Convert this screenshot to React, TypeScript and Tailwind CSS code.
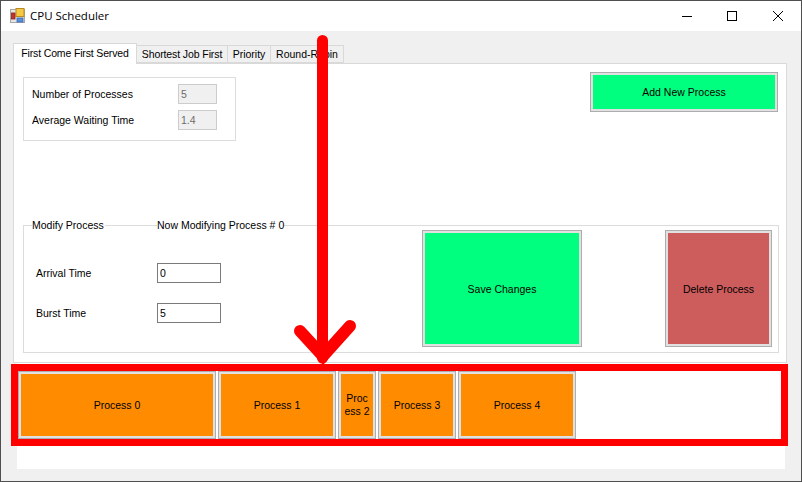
const font = "font-['Liberation_Sans',Arial,sans-serif]";

function Btn({ w, h, color, children }: { w: string; h: string; color: string; children: React.ReactNode }) {
  return (
    <div className={`${w} ${h} shrink-0 border border-[#adadad] bg-[#e1e1e1] p-[2px]`}>
      <div className={`${color} flex h-full w-full items-center justify-center text-center leading-[13px] text-black`}>
        {children}
      </div>
    </div>
  );
}

function AppIcon() {
  return (
    <svg width="16" height="16" viewBox="0 0 16 16" className="shrink-0">
      <rect x="0.5" y="1.5" width="14" height="13" fill="#e4e4e4" stroke="#a8a8a8" />
      <rect x="6" y="0.5" width="8" height="8" fill="#f6c945" stroke="#b98a1e" />
      <rect x="1.5" y="5" width="3.5" height="6" fill="#c8322b" stroke="#8a2320" strokeWidth="0.8" />
      <rect x="7" y="10" width="6" height="4" fill="#5b8fdc" stroke="#3a68b0" strokeWidth="0.8" />
    </svg>
  );
}

export default function App() {
  return (
    <div className={`${font} relative h-[482px] w-[802px] overflow-hidden border border-[#4f4f4f] bg-[#f0f0f0] text-[10.5px] leading-[13px] text-black`}>
      {/* title bar */}
      <div className="flex h-[30px] items-center bg-white pl-[9px]">
        <AppIcon />
        <span className="mb-[2px] ml-[4px] font-['Open_Sans',sans-serif] text-[11.5px] text-black">CPU Scheduler</span>
        <div className="ml-auto flex items-center pr-[18px]">
          <svg width="10" height="10" viewBox="0 0 10 10" className="mr-[35px]">
            <path d="M0 5.5H10" stroke="#000" strokeWidth="1" />
          </svg>
          <svg width="10" height="10" viewBox="0 0 10 10" className="mr-[36px]">
            <rect x="0.5" y="0.5" width="9" height="9" fill="none" stroke="#000" strokeWidth="1" />
          </svg>
          <svg width="10" height="10" viewBox="0 0 10 10">
            <path d="M0 0L10 10M10 0L0 10" stroke="#000" strokeWidth="1" />
          </svg>
        </div>
      </div>

      {/* tabs */}
      <div className="ml-[12px] mt-[12px] flex h-[20px] items-end">
        <div className="relative z-10 -mb-px flex h-[21px] w-[124px] items-start justify-center border border-b-0 border-[#d9d9d9] bg-white pt-[3px] tracking-[-0.15px]">
          First Come First Served
        </div>
        <div className="flex h-[18px] w-[91px] items-center justify-center border-y border-r border-[#d9d9d9] tracking-[-0.1px]">Shortest Job First</div>
        <div className="flex h-[18px] w-[43px] items-center justify-center border-y border-r border-[#d9d9d9]">Priority</div>
        <div className="flex h-[18px] w-[73px] items-center justify-center border-y border-r border-[#d9d9d9]">Round-Robin</div>
      </div>

      {/* tab page */}
      <div className="ml-[12px] h-[300px] w-[774px] border border-[#d9d9d9] bg-white">
        <div className="flex items-start justify-between">
          <div className="ml-[9px] mt-[13px] flex h-[64px] w-[213px] flex-col gap-[6px] border border-[#dcdcdc] pl-[8px] pt-[6px]">
            <div className="flex h-[20px] items-center">
              <span className="w-[146px]">Number of Processes</span>
              <div className="flex h-[20px] w-[39px] items-center border border-[#cccccc] bg-[#f0f0f0] pl-[2px] text-[#6d6d6d]">5</div>
            </div>
            <div className="flex h-[20px] items-center">
              <span className="w-[146px]">Average Waiting Time</span>
              <div className="flex h-[20px] w-[39px] items-center border border-[#cccccc] bg-[#f0f0f0] pl-[2px] text-[#6d6d6d]">1.4</div>
            </div>
          </div>
          <div className="mr-[8px] mt-[8px]">
            <Btn w="w-[188px]" h="h-[40px]" color="bg-[#00ff7f]">Add New Process</Btn>
          </div>
        </div>

        <div className="relative ml-[9px] mt-[84px] flex h-[128px] w-[756px] items-start border border-[#dcdcdc]">
          <span className="absolute -top-[7px] left-[8px] bg-white pr-[1px]">Modify Process</span>
          <span className="absolute -top-[7px] left-[133px] bg-white">Now Modifying Process # 0</span>
          <div className="flex w-[398px] shrink-0 flex-col gap-[20px] pl-[12px] pt-[37px]">
            <div className="flex h-[20px] items-center">
              <span className="w-[121px]">Arrival Time</span>
              <div className="flex h-[20px] w-[64px] items-center border border-[#7a7a7a] bg-white pl-[2px]">0</div>
            </div>
            <div className="flex h-[20px] items-center">
              <span className="w-[121px]">Burst Time</span>
              <div className="flex h-[20px] w-[64px] items-center border border-[#7a7a7a] bg-white pl-[2px]">5</div>
            </div>
          </div>
          <div className="mt-[4px]">
            <Btn w="w-[160px]" h="h-[117px]" color="bg-[#00ff7f] pt-[1px]">Save Changes</Btn>
          </div>
          <div className="ml-[83px] mt-[4px]">
            <Btn w="w-[107px]" h="h-[117px]" color="bg-[#cd5c5c] pt-[1px]">Delete Process</Btn>
          </div>
        </div>
      </div>

      {/* process queue */}
      <div className="ml-[16px] flex h-[106px] w-[768px] items-start gap-[2px] bg-white pl-[1px] pt-[8px]">
        <Btn w="w-[198px]" h="h-[68px]" color="bg-[#ff8c00]">Process 0</Btn>
        <Btn w="w-[118px]" h="h-[68px]" color="bg-[#ff8c00]">Process 1</Btn>
        <Btn w="w-[38px]" h="h-[68px]" color="bg-[#ff8c00]">Proc<br />ess 2</Btn>
        <Btn w="w-[78px]" h="h-[68px]" color="bg-[#ff8c00]">Process 3</Btn>
        <Btn w="w-[118px]" h="h-[68px]" color="bg-[#ff8c00]">Process 4</Btn>
      </div>

      {/* red annotation over the screenshot */}
      <div className="absolute left-[10px] top-[363px] h-[82px] w-[777px] border-[7px] border-[#ff0000]" />
      <svg className="absolute -left-px -top-px" width="802" height="482" viewBox="0 0 802 482" fill="none">
        <path d="M322.5 40.5V358" stroke="#ff0000" strokeWidth="11" strokeLinecap="round" />
        <path d="M300 331L323 356L350 326" stroke="#ff0000" strokeWidth="12" strokeLinecap="round" strokeLinejoin="miter" />
      </svg>
    </div>
  );
}
